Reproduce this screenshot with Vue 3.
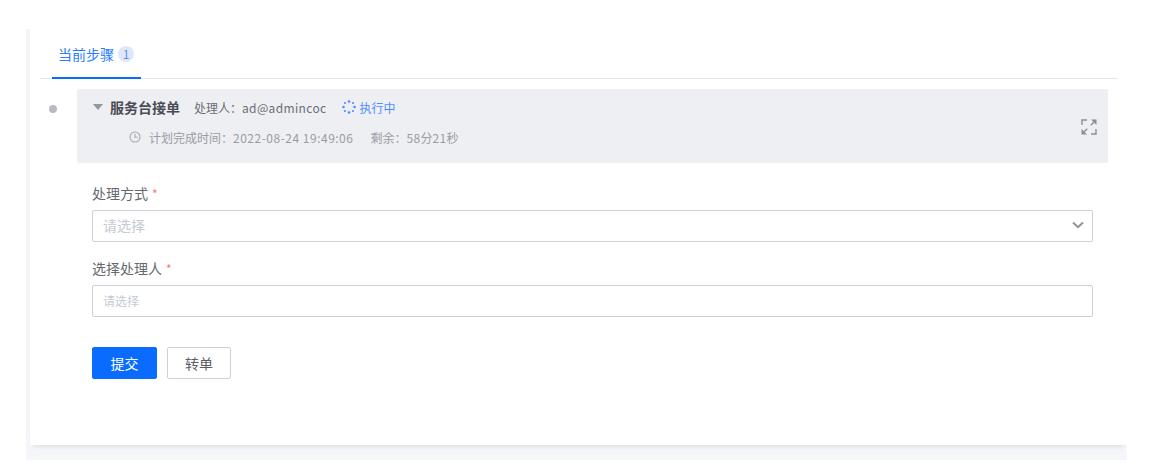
<template>
  <div class="page">
    <div class="backdrop">
      <div class="panel">
        <div class="tabs">
          <div class="tab">
            <span>当前步骤</span>
            <span class="count">1</span>
          </div>
        </div>
        <div class="step">
          <div class="rail"><span class="dot"></span></div>
          <div class="content">
            <div class="head">
              <div class="head-main">
                <div class="line-one">
                  <span class="caret"></span>
                  <strong class="title">服务台接单</strong>
                  <span class="handler">处理人&#xFF1A;<span class="num">ad@admincoc</span></span>
                  <svg class="spin" width="14" height="14" viewBox="0 0 14 14" fill="#4f8dff">
                    <circle cx="7" cy="1.5" r="1.3" />
                    <circle cx="11" cy="3" r="1.1" />
                    <circle cx="12.5" cy="7" r="1.3" />
                    <circle cx="11" cy="11" r="1.1" />
                    <circle cx="7" cy="12.5" r="1.3" />
                    <circle cx="3" cy="11" r="1.1" />
                    <circle cx="1.5" cy="7" r="1.3" />
                    <circle cx="3" cy="3" r="1.1" />
                  </svg>
                  <span class="status">执行中</span>
                </div>
                <div class="line-two">
                  <svg width="12" height="12" viewBox="0 0 12 12" fill="none" stroke="#a8abb3" stroke-width="1.1">
                    <circle cx="6" cy="6" r="5" />
                    <path d="M6 3v3.2h2.6" />
                  </svg>
                  <span class="plan">计划完成时间&#xFF1A;<span class="date">2022-08-24 19:49:06</span></span>
                  <span class="remain">剩余&#xFF1A;<span class="num">58</span>分<span class="num">21</span>秒</span>
                </div>
              </div>
              <svg class="expand" width="16" height="16" viewBox="0 0 16 16" fill="none" stroke="#8c8f98" stroke-width="1.4">
                <path d="M1 6V1h5" />
                <path d="M15 10v5h-5" />
                <path d="M9.8 6.2 14 2" />
                <path d="M10 .5h5.500v5.500z" fill="#8c8f98" stroke="none" />
                <path d="M6.200 9.800 2 14" />
                <path d="M6 15.500H.5V10z" fill="#8c8f98" stroke="none" />
              </svg>
            </div>
            <form class="form" @submit.prevent>
              <div class="field">
                <div class="label">处理方式<span class="req">*</span></div>
                <div class="control select">
                  <span class="ph-lg">请选择</span>
                  <svg width="12" height="8" viewBox="0 0 12 8" fill="none" stroke="#8f929a" stroke-width="2">
                    <path d="M1 1.500 6 6.200l5-4.700" />
                  </svg>
                </div>
              </div>
              <div class="field">
                <div class="label">选择处理人<span class="req">*</span></div>
                <div class="control">
                  <span class="ph-sm">请选择</span>
                </div>
              </div>
              <div class="actions">
                <button type="button" class="btn primary">提交</button>
                <button type="button" class="btn">转单</button>
              </div>
            </form>
          </div>
        </div>
      </div>
    </div>
  </div>
</template>

<script setup>
</script>

<style>
html, body { margin: 0; background: #fff; }
</style>

<style scoped>
.page {
  width: 1158px;
  height: 468px;
  padding: 29px 31px 8px 26px;
  box-sizing: border-box;
  font-family: "Noto Sans CJK SC", "Noto Sans", sans-serif;
  color: #555760;
  overflow: hidden;
}
.backdrop {
  height: 431px;
  background: #f5f6fa;
  padding-left: 4px;
  overflow: hidden;
}
.panel {
  height: 416px;
  background: #fff;
  box-shadow: 0 4px 5px -3px rgba(0, 0, 0, 0.12);
  padding: 0 9px 0 10px;
  box-sizing: border-box;
}
.tabs {
  height: 50px;
  border-bottom: 1px solid #e4e5e8;
  box-sizing: border-box;
  display: flex;
  align-items: flex-end;
  padding-left: 12px;
}
.tab {
  width: 89px;
  height: 50px;
  box-sizing: border-box;
  border-bottom: 2px solid #0a6cff;
  margin-bottom: -1px;
  padding: 13px 0 0 6px;
  display: flex;
  align-items: flex-start;
  gap: 4px;
  font-size: 14px;
  line-height: 24px;
  color: #2a7bff;
}
.count {
  width: 16px;
  height: 16px;
  margin-top: 4px;
  border-radius: 50%;
  background: #dfe8fb;
  color: #5e8fe8;
  font-size: 12px;
  line-height: 16px;
  text-align: center;
}
.step {
  display: flex;
  padding-top: 10px;
}
.rail {
  width: 37px;
  flex: none;
  padding: 16px 0 0 9px;
  box-sizing: border-box;
}
.dot {
  display: block;
  width: 8px;
  height: 8px;
  border-radius: 50%;
  background: #b9bbc1;
}
.content {
  width: 1031px;
}
.head {
  height: 74px;
  background: #eeeff3;
  border-radius: 2px;
  padding: 0 11px 0 15px;
  box-sizing: border-box;
  display: flex;
  align-items: center;
  justify-content: space-between;
}
.head-main {
  display: flex;
  flex-direction: column;
  margin-top: -8px;
}
.line-one {
  height: 20px;
  display: flex;
  align-items: center;
  font-size: 12px;
  color: #6b6d75;
}
.caret {
  width: 0;
  height: 0;
  border-left: 5px solid transparent;
  border-right: 5px solid transparent;
  border-top: 6px solid #94969d;
  margin: 0 7px 1px 1px;
}
.title {
  font-size: 14px;
  font-weight: 700;
  color: #4a4c54;
  margin-right: 14px;
}
.handler {
  font-size: 12px;
  margin-right: 15px;
}
.num {
  letter-spacing: 0.35px;
}
.date {
  letter-spacing: 0.5px;
}
.status {
  margin-left: 4px;
  color: #4f8dff;
}
.line-two {
  height: 20px;
  margin-top: 10px;
  padding-left: 37px;
  display: flex;
  align-items: center;
  font-size: 12px;
  color: #a0a2a9;
}
.plan {
  margin-left: 8px;
  margin-right: 17px;
  color: #9a9ca3;
}
.remain {
  color: #9a9ca3;
}
.expand {
  margin-top: 1px;
}
.form {
  padding: 21px 15px 0;
}
.field {
  margin-bottom: 17px;
}
.label {
  height: 20px;
  line-height: 18px;
  font-size: 14px;
  color: #666870;
  margin-bottom: 6px;
}
.req {
  color: #f07a7a;
  font-size: 12px;
  margin-left: 4px;
}
.control {
  height: 32px;
  box-sizing: border-box;
  border: 1px solid #cfd0d6;
  border-radius: 2px;
  padding: 0 8px 1px 10px;
  display: flex;
  align-items: center;
  justify-content: space-between;
  background: #fff;
}
.select {
  padding-bottom: 2px;
}
.ph-lg {
  font-size: 14px;
  color: #c5cad3;
}
.ph-sm {
  font-size: 12px;
  color: #c5cad3;
}
.actions {
  display: flex;
  gap: 10px;
  padding-top: 13px;
}
.btn {
  width: 64px;
  height: 32px;
  padding: 0;
  border: 1px solid #cfd0d6;
  border-radius: 2px;
  background: #fff;
  color: #5a5c64;
  font: inherit;
  font-size: 14px;
}
.btn.primary {
  width: 65px;
  background: #0a6cff;
  border-color: #0a6cff;
  color: #fff;
}
</style>
